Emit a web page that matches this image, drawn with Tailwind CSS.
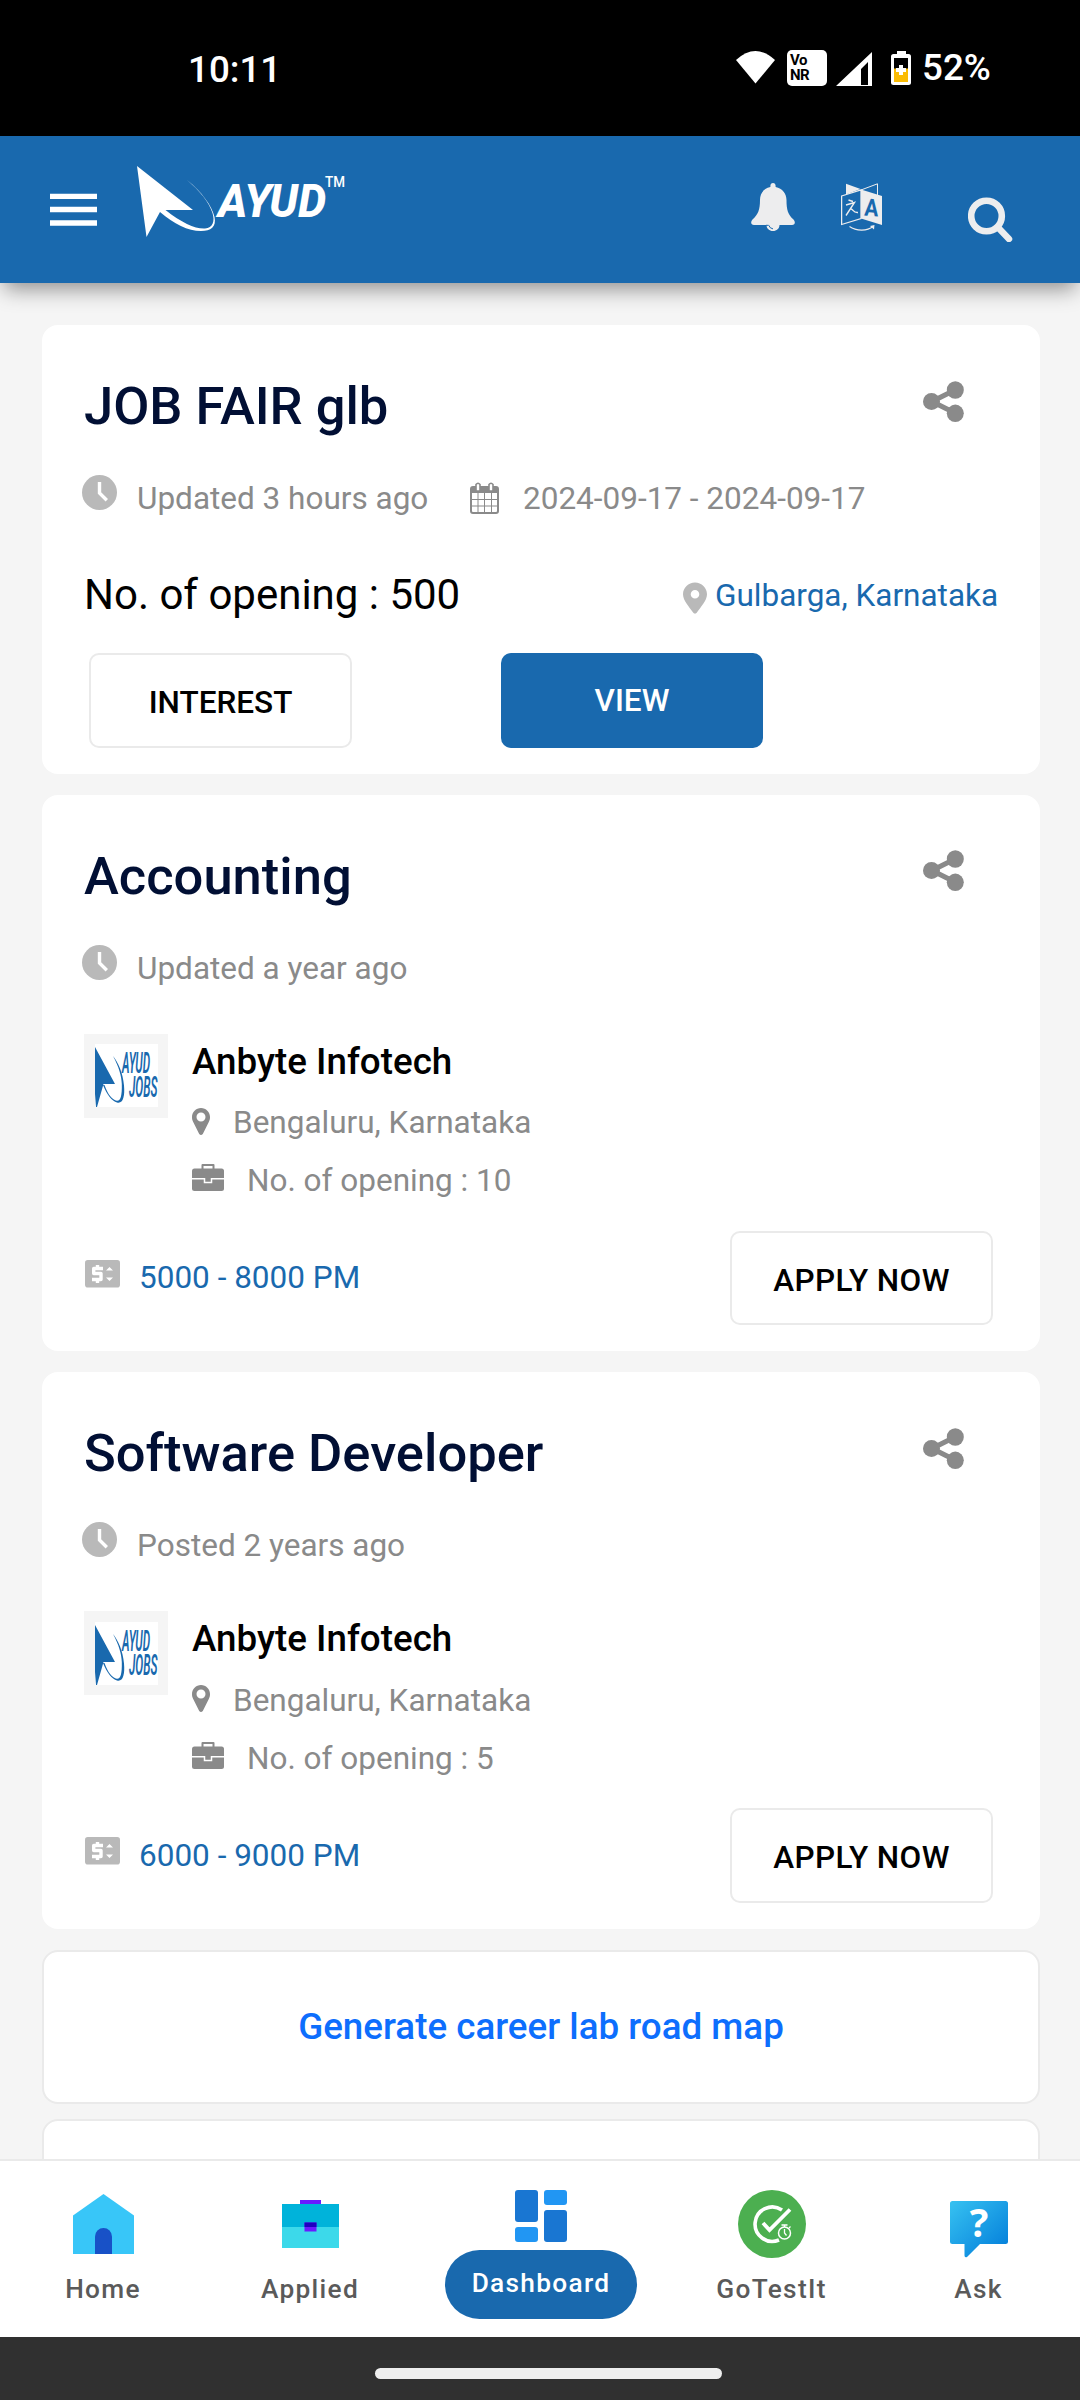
<!DOCTYPE html>
<html lang="en">
<head>
<meta charset="utf-8">
<title>AYUD Jobs</title>
<script src="https://cdn.jsdelivr.net/npm/@tailwindcss/browser@4"></script>
</head>
<body class="w-[1080px] h-[2400px] overflow-hidden bg-[#f5f5f5] font-['Roboto',sans-serif] flex flex-col text-black">

<svg class="hidden">
  <symbol id="share" viewBox="0 0 41 41"><path d="M32 9 9 20.500 32 32" fill="none" stroke="#8a8a8a" stroke-width="5.200"/><ellipse cx="32.300" cy="9" rx="8.500" ry="8.700" fill="#8a8a8a"/><ellipse cx="8.500" cy="20.500" rx="8.500" ry="8.500" fill="#8a8a8a"/><ellipse cx="32.300" cy="32.300" rx="8.500" ry="8.700" fill="#8a8a8a"/></symbol>
  <symbol id="clock" viewBox="0 0 35 35"><circle cx="17.500" cy="17.500" r="17.500" fill="#b9b9b9"/><path d="M17.500 7v11l7.300 7.200" fill="none" stroke="#fff" stroke-width="3.400"/></symbol>
  <symbol id="pin" viewBox="0 0 24 31"><path fill-rule="evenodd" d="M12 0C5.400 0 0 5.200 0 11.700 0 18 6 24 10.300 30.200q1.700 1.700 3.400 0C18 24 24 18 24 11.700 24 5.200 18.600 0 12 0Zm0 7.500a4.300 4.300 0 1 1 0 8.600 4.300 4.300 0 0 1 0-8.600Z" fill="currentColor"/></symbol>
  <symbol id="marker" viewBox="0 0 18 27"><path fill-rule="evenodd" d="M9 0C4 0 0 4 0 9c0 2 .4 3.500 1.200 5L7.200 26q1.800 1.800 3.600 0l6-12c.8-1.500 1.200-3 1.200-5 0-5-4-9-9-9Zm0 4.500a4.500 4.500 0 1 1 0 9 4.500 4.500 0 0 1 0-9Z" fill="#8a8a8a"/></symbol>
  <symbol id="briefcase" viewBox="0 0 32 27"><path d="M10.500 5V1h11v4" fill="none" stroke="#8a8a8a" stroke-width="2" stroke-linejoin="round"/><rect y="4.500" width="32" height="22.500" rx="2.500" fill="#8a8a8a"/><path d="M0 14.800h12.500v3.700h7v-3.700H32" fill="none" stroke="#fff" stroke-width="1.500"/></symbol>
  <symbol id="money" viewBox="0 0 35 28"><rect width="35" height="27.500" rx="2.800" fill="#b9b9b9"/><path d="M18 8.500H8.700v5H16v6H7M12.500 5v4m0 10v4" fill="none" stroke="#fff" stroke-width="3.400" stroke-linejoin="round"/><path d="M21 10.500 24.500 7l3.500 3.500ZM21 17.500l3.500 3.500 3.500-3.500Z" fill="#fff"/></symbol>
  <symbol id="company" viewBox="0 0 63 63"><path fill="#fff" d="M0 0h63v63H0z"/><path d="M0 3 20 40H8.500L2 63H1L0 50ZM8 41C12 51 17 57 22 58.500c6 1.500 8-6 7-17C28 29 23 18 18 12c6 11 8.500 20 8.800 28 .3 12-1.300 17.300-5 16.700C17.500 56 13 51 9.500 41Z" fill="#1969ae"/><text x="27" y="29" textLength="28" lengthAdjust="spacingAndGlyphs" font-size="29" font-style="italic" font-weight="600" fill="#1969ae">AYUD</text><text x="34" y="53" textLength="28.500" lengthAdjust="spacingAndGlyphs" font-size="29" font-style="italic" font-weight="600" fill="#1969ae">JOBS</text></symbol>
</svg>

<!-- Status bar -->
<div class="h-[136px] shrink-0 bg-black text-white flex items-start pl-[188px] pt-[50px]">
  <div class="w-[548px] text-[36.75px] leading-[37px] font-medium mt-px">10:11</div>
  <svg class="w-[39px] h-[34px] shrink-0" viewBox="0 0 39 34"><path d="M0 10Q19.500-8 39 10L19.500 33.500Z" fill="#fff"/></svg>
  <div class="ml-3 w-10 h-9 rounded-[5px] bg-white text-black text-[15px] leading-[15px] font-bold tracking-[-0.5px] pl-[3px] pt-[3px] shrink-0">Vo<br>NR</div>
  <svg class="ml-[9px] w-[36px] h-[36px] shrink-0" viewBox="0 0 36 36"><path fill-rule="evenodd" d="M36 2v34H0ZM32 12 25 19v16h7Z" fill="#fff"/></svg>
  <svg class="ml-[19px] w-[20px] h-[36px] shrink-0" viewBox="0 0 20 36"><path d="M6 1h9v4H6z" fill="#fff"/><rect y="4" width="20" height="31" rx="2.500" fill="#fff"/><path d="M3 8h14v11H3z" fill="#000"/><path d="M3 18.500h14V32H3z" fill="#fbbc04"/><path d="M10 15v10M5 20h10" stroke="#fff" stroke-width="4"/></svg>
  <div class="ml-[11px] text-[36.75px] leading-[37px] font-medium -mt-px">52%</div>
</div>

<!-- App bar -->
<header class="h-[147px] shrink-0 bg-[#1969ae] flex items-start pl-[50px] relative shadow-[0_10px_20px_-4px_rgba(0,0,0,0.42)]">
  <svg class="mt-[57px] w-[47px] h-[34px]" viewBox="0 0 47 34"><path d="M0 3.300h47M0 16.500h47M0 30h47" stroke="#fff" stroke-width="5.300"/></svg>
  <svg class="ml-10 mt-[29px] w-[210px] h-[73px]" viewBox="0 0 210 73"><path d="M0 1 56 45H28.500C45 58 58 64 68 63.500 76 63 78 56 75.500 48 72 37 63 26 50 15 65 27 75 41 77.500 52 79.500 62 74 66 64 66 51 66 37 59 23 47L9.500 72Z" fill="#fff"/><text x="81" y="52" textLength="108" lengthAdjust="spacingAndGlyphs" font-size="47" font-weight="800" font-style="italic" fill="#fff">AYUD</text><text x="188" y="22" textLength="20" lengthAdjust="spacingAndGlyphs" font-size="14.500" font-weight="500" fill="#fff">TM</text></svg>
  <svg class="ml-[404px] mt-[47px] w-[44px] h-[48px]" viewBox="0 0 44 48" fill="#ededee"><path d="M22 0c-1.600 0-2.600 1.200-2.600 2.700V4C12.500 5.500 9 10.500 9 17c0 10-2 14.500-7.500 19.500C-.8 39 0 42 3 42h12.500c0 3.500 2.800 6 6.500 6s6.500-2.500 6.500-6H41c3 0 3.800-3 1.500-5.500C37 31.500 35.500 27 35.500 17c0-6.500-4-11.500-10.900-13V2.700C24.600 1.200 23.600 0 22 0Z"/><path d="M15 42.300h2.500M17.800 42.300q.8 3 4.200 3.600" fill="none" stroke="#1969ae" stroke-width="1"/></svg>
  <svg class="ml-[46px] mt-[47px] w-[42px] h-[48px]" viewBox="0 0 42 48" fill="none"><path d="M5 .7 19.500 6 5 11.500Z" fill="#ededee"/><path d="M20 7 36.500.8V13" stroke="#ededee"/><path d="M.6 13 20 6.800V35.500L.6 41.500Z" stroke="#ededee" stroke-width="1.300"/><path d="M20 6.500 41 13v29L20 35.500Z" fill="#ededee"/><path d="m7.500 17 4.500 1.500M5 22l8.500-2.500L5 32.500M9.500 26c3-.5 2 4 7.500 3.500" stroke="#ededee" stroke-width="1.400"/><text x="23.500" y="33" textLength="14" lengthAdjust="spacingAndGlyphs" transform="rotate(4 30 25)" font-size="24" font-weight="700" fill="#1969ae">A</text><path d="M8.500 43.500C15 48 26 48.500 32 43.500" stroke="#ededee" stroke-width="1.200"/><path d="m29 43 4.500-1-.5 4.500Z" fill="#ededee"/></svg>
  <svg class="ml-[85px] mt-[61px] w-[45px] h-[45px]" viewBox="0 0 45 45" fill="none" stroke="#ededee"><circle cx="18.500" cy="19" r="15.300" stroke-width="6.600"/><path d="M31 31.500 41 42" stroke-width="6.500" stroke-linecap="round"/></svg>
</header>

<main class="h-[1876px] shrink-0 overflow-hidden flex flex-col px-[42px] pt-[42px] pr-[40px]">
  <!-- Job fair -->
  <article class="h-[449px] shrink-0 rounded-2xl bg-white pl-[42px] pt-[55px]">
    <div class="flex h-[52px]">
      <h2 class="w-[839px] text-[52.5px] leading-[52px] font-medium text-[#010f34]">JOB FAIR glb</h2>
      <svg class="w-[41px] h-[41px] mt-px"><use href="#share"/></svg>
    </div>
    <div class="mt-[43px] h-[38px] -ml-0.5 flex text-[31.5px] leading-[32px] text-[#8a8a8a]">
      <svg class="w-[35px] h-[35px]"><use href="#clock"/></svg>
      <span class="ml-5 mt-2 w-[333px]">Updated 3 hours ago</span>
      <svg class="w-[29px] h-[32px] mt-[7px]" viewBox="0 0 29 32"><rect x="1" y="5" width="27" height="26" rx="2" fill="#fff" stroke="#8a8a8a" stroke-width="2"/><path d="M1 5h27v6H1z" fill="#8a8a8a"/><path d="M8 11v19M14.500 11v19M21.500 11v19M1 17.500h27M1 24h27" stroke="#8a8a8a"/><path d="M6 9V2.500q2-2.500 4 0V9ZM19 9V2.500q2-2.500 4 0V9Z" fill="#fff" stroke="#8a8a8a" stroke-width="1.600"/></svg>
      <span class="ml-6 mt-2">2024-09-17 - 2024-09-17</span>
    </div>
    <div class="mt-[60px] h-[42px] flex items-start">
      <span class="w-[599px] mt-px text-[42px] leading-[42px]">No. of opening : 500</span>
      <svg class="mt-[9px] w-6 h-8 text-[#b9b9b9]"><use href="#pin"/></svg>
      <span class="ml-2 mt-[7px] text-[31.5px] leading-[32px] text-[#1969ae]">Gulbarga, Karnataka</span>
    </div>
    <div class="mt-[38px] ml-[5px] flex gap-[149px] text-[31.500px] leading-[32px] font-medium">
      <button class="w-[263px] h-[95px] rounded-[10px] border-2 border-[#eaeaea] pt-[4px]">INTEREST</button>
      <button class="w-[262px] h-[95px] rounded-[10px] bg-[#1969ae] text-white">VIEW</button>
    </div>
  </article>

  <!-- Accounting -->
  <article class="mt-[21px] h-[556px] shrink-0 rounded-2xl bg-white pl-[42px] pt-[55px]">
    <div class="flex h-[52px]">
      <h2 class="w-[839px] text-[52.5px] leading-[52px] font-medium text-[#010f34]">Accounting</h2>
      <svg class="w-[41px] h-[41px]"><use href="#share"/></svg>
    </div>
    <div class="mt-[43px] h-[38px] -ml-0.5 flex text-[31.5px] leading-[32px] text-[#8a8a8a]">
      <svg class="w-[35px] h-[35px]"><use href="#clock"/></svg>
      <span class="ml-5 mt-2">Updated a year ago</span>
    </div>
    <div class="mt-[51px] flex items-start">
      <div class="w-[84px] h-[84px] bg-[#f5f5f5] pl-[11px] pt-[10px]"><svg class="w-[63px] h-[63px]"><use href="#company"/></svg></div>
      <div class="ml-6 pt-[9px] text-[31.5px] leading-[32px] text-[#8a8a8a]">
        <h3 class="text-[36.75px] leading-[37px] font-medium text-black">Anbyte Infotech</h3>
        <p class="mt-[27px] flex"><svg class="mt-px w-[18px] h-[27px] mr-[23px]"><use href="#marker"/></svg>Bengaluru, Karnataka</p>
        <p class="mt-[26px] flex"><svg class="-mt-px w-8 h-[27px] mr-[23px]"><use href="#briefcase"/></svg>No. of opening : 10</p>
      </div>
    </div>
    <div class="mt-[34px] flex items-start text-[31.5px] leading-[32px]">
      <svg class="ml-px mt-[29px] w-[35px] h-[28px]"><use href="#money"/></svg>
      <span class="ml-[18px] mt-[31px] w-[508px] pl-px text-[#1969ae]">5000 - 8000 PM</span>
      <button class="ml-[84px] w-[263px] h-[94px] shrink-0 rounded-[10px] border-2 border-[#eaeaea] pt-[5px] font-medium tracking-[0.4px]">APPLY NOW</button>
    </div>
  </article>

  <!-- Software Developer -->
  <article class="mt-[21px] h-[557px] shrink-0 rounded-2xl bg-white pl-[42px] pt-[55px]">
    <div class="flex h-[52px]">
      <h2 class="w-[839px] text-[52.5px] leading-[52px] font-medium text-[#010f34]">Software Developer</h2>
      <svg class="w-[41px] h-[41px] mt-px"><use href="#share"/></svg>
    </div>
    <div class="mt-[43px] h-[38px] -ml-0.5 flex text-[31.5px] leading-[32px] text-[#8a8a8a]">
      <svg class="w-[35px] h-[35px]"><use href="#clock"/></svg>
      <span class="ml-5 mt-2">Posted 2 years ago</span>
    </div>
    <div class="mt-[51px] flex items-start">
      <div class="w-[84px] h-[84px] bg-[#f5f5f5] pl-[11px] pt-[11px]"><svg class="w-[63px] h-[63px]"><use href="#company"/></svg></div>
      <div class="ml-6 pt-[9px] text-[31.5px] leading-[32px] text-[#8a8a8a]">
        <h3 class="text-[36.75px] leading-[37px] font-medium text-black">Anbyte Infotech</h3>
        <p class="mt-[28px] flex"><svg class="w-[18px] h-[27px] mr-[23px]"><use href="#marker"/></svg>Bengaluru, Karnataka</p>
        <p class="mt-[26px] flex"><svg class="-mt-px w-8 h-[27px] mr-[23px]"><use href="#briefcase"/></svg>No. of opening : 5</p>
      </div>
    </div>
    <div class="mt-[33px] flex items-start text-[31.5px] leading-[32px]">
      <svg class="ml-px mt-[29px] w-[35px] h-[28px]"><use href="#money"/></svg>
      <span class="ml-[18px] mt-[32px] w-[508px] pl-px text-[#1969ae]">6000 - 9000 PM</span>
      <button class="ml-[84px] w-[263px] h-[95px] shrink-0 rounded-[10px] border-2 border-[#eaeaea] pt-[4px] font-medium tracking-[0.4px]">APPLY NOW</button>
    </div>
  </article>

  <button class="mt-[21px] h-[154px] shrink-0 rounded-2xl border-2 border-[#eaeaea] bg-white text-[36.75px] font-medium text-[#0d6efd]">Generate career lab road map</button>
  <div class="mt-[15px] h-[154px] shrink-0 rounded-2xl border-2 border-[#eaeaea] bg-white"></div>
</main>

<!-- Bottom navigation -->
<nav class="h-[178px] shrink-0 bg-white border-t-2 border-[#eaeaea] flex items-start text-[26.25px] leading-[26px] font-medium tracking-[1.3px] text-[#5a5a5a]">
  <a class="w-[206px] flex flex-col items-center pt-[33px]">
    <svg class="w-[61px] h-[60px]" viewBox="0 0 61 60"><path d="M30.500 0 61 21.500V60H0V21.500Z" fill="#38c6f8"/><path d="M22 60V42.500a8.500 8.500 0 0 1 17 0V60Z" fill="#1851c7"/></svg>
    <span class="mt-[22px]">Home</span>
  </a>
  <a class="w-[208px] flex flex-col items-center pt-[39px]">
    <svg class="w-[57px] h-[48px]" viewBox="0 0 57 48"><path d="M18 0h21v4H18z" fill="#6a1aff"/><path d="M0 4h57v23H0z" fill="#00b3da"/><path d="M0 27h57v21H0z" fill="#3cd9ea"/><path d="M22.500 22.500h12v9h-12z" fill="#6a1aff"/><path d="M22.500 22.500h12V27h-12z" fill="#1f00c0"/></svg>
    <span class="mt-7">Applied</span>
  </a>
  <a class="w-[254px] flex flex-col items-center pt-[29px]">
    <svg class="w-[52px] h-[52px]" viewBox="0 0 52 52"><rect width="23" height="32" rx="3" fill="#1976d2"/><rect y="37" width="23" height="15" rx="3" fill="#2196f3"/><rect x="29" width="23" height="15" rx="3" fill="#2196f3"/><rect x="29" y="20" width="23" height="32" rx="3" fill="#1976d2"/></svg>
    <span class="mt-2 w-[192px] h-[69px] rounded-full bg-[#1969ae] text-white text-center pt-5">Dashboard</span>
  </a>
  <a class="w-[207px] flex flex-col items-center pt-[29px]">
    <svg class="w-[68px] h-[68px]" viewBox="0 0 68 68" fill="none" stroke="#fff"><circle cx="34" cy="34" r="34" fill="#4caf50" stroke="none"/><path d="M44 20A17.200 17.200 0 1 0 41 50" stroke-width="3.600"/><path d="m25 33 6.500 7L52 19.500" stroke-width="3.800"/><circle cx="46.500" cy="43" r="6" stroke-width="1.500"/><path d="M46.500 39v4l2 2.500M46.500 35v2M43.500 35h6M51 38l1.500-1.500" stroke-width="1.300"/></svg>
    <span class="mt-[18px]">GoTestIt</span>
  </a>
  <a class="w-[205px] flex flex-col items-center pt-10 pl-[2px]">
    <svg class="w-[58px] h-[57px] overflow-visible" viewBox="0 0 58 57"><defs><linearGradient id="ask" x1="0" y1="0" x2="1" y2="1"><stop offset="0" stop-color="#37c2f1"/><stop offset="1" stop-color="#007ad9"/></linearGradient></defs><path d="M2.500 0h53A2.500 2.500 0 0 1 58 2.500v38a2.500 2.500 0 0 1-2.500 2.500H30L17 56q-2.500 1-2.500-1.500V43h-12A2.500 2.500 0 0 1 0 40.500v-38A2.500 2.500 0 0 1 2.500 0Z" fill="url(#ask)"/><text x="29" y="36" text-anchor="middle" class="tracking-normal" font-family="Open Sans" font-size="39" font-weight="700" fill="#fff">?</text></svg>
    <span class="mt-[18px]">Ask</span>
  </a>
</nav>

<div class="h-[63px] shrink-0 bg-[#303030] flex justify-center pt-[31px] pl-[17px]">
  <div class="w-[347px] h-[11px] rounded-full bg-[#eee]"></div>
</div>
</body>
</html>
